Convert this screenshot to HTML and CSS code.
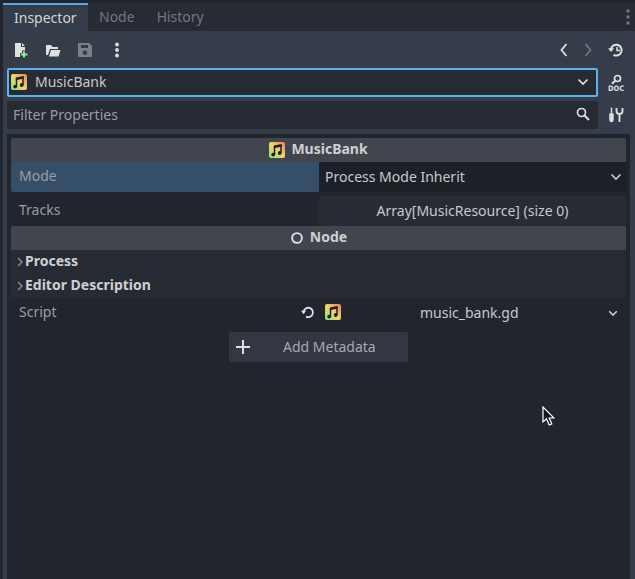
FILE: index.html

```html
<!DOCTYPE html>
<html lang="en">
<head>
  <meta charset="UTF-8" />
  <title>Inspector</title>
  <link rel="stylesheet" href="styles.css">
</head>
<body>

<svg width="0" height="0" class="defs">
  <defs>
    <linearGradient id="musicGrad" x1="0" y1="1" x2="1" y2="0">
      <stop offset="0" stop-color="#7fe67a" />
      <stop offset="0.5" stop-color="#f2d565" />
      <stop offset="1" stop-color="#ec7f5c" />
    </linearGradient>
    <symbol id="music" viewBox="0 0 16 16">
      <rect width="16" height="16" rx="2" fill="url(#musicGrad)" />
      <path d="M5.5 4.5 V12.5 M12 3 V11" fill="none" stroke="#1d2027" stroke-width="1.5" />
      <path d="M4.8 3.6 L12.7 2 V4.6 L4.8 6.2 Z" fill="#1d2027" />
      <circle cx="4.2" cy="12.6" r="1.9" fill="#1d2027" />
      <circle cx="10.7" cy="11" r="1.9" fill="#1d2027" />
    </symbol>
  </defs>
</svg>

<div class="dock">

  <div class="tabbar">
    <div class="tab active">Inspector</div>
    <div class="tab">Node</div>
    <div class="tab">History</div>
    <svg class="tab-menu" width="4" height="16" viewBox="0 0 4 16"><circle cx="2" cy="2" r="1.7" /><circle cx="2" cy="8" r="1.7" /><circle cx="2" cy="14" r="1.7" /></svg>
  </div>

  <div class="toolbar">
    <svg class="tool" width="16" height="16" viewBox="0 0 16 16">
      <path d="M2 1 H8 V5 H12 V8.5 H9 V11 H7 V15 H2 Z M9 1 L12 4 H9 Z" fill="#e0e0e0" />
      <path d="M10 9.5 H12 V11.5 H14.5 V13.5 H12 V15.5 H10 V13.5 H7.8 V11.5 H10 Z" fill="#8eef97" />
    </svg>
    <svg class="tool" width="16" height="16" viewBox="0 0 16 16">
      <path d="M1 13 V3 H6 L7.5 5 H13 V7 H5 L3 13 Z M4 14.5 L6 8 H15.5 L13.5 14.5 Z" fill="#e0e0e0" />
    </svg>
    <svg class="tool" width="16" height="16" viewBox="0 0 16 16">
      <path fill-rule="evenodd" d="M2 1 H12 L15 4 V14 a1 1 0 0 1 -1 1 H2 a1 1 0 0 1 -1 -1 V2 a1 1 0 0 1 1 -1 Z M4 3 V6 H11 V3 Z M8 8.5 a2.3 2.3 0 1 0 0.01 0 Z" fill="#7c7f86" />
    </svg>
    <svg class="tool" width="16" height="16" viewBox="0 0 16 16"><circle cx="8" cy="2.5" r="1.9" fill="#e0e0e0" /><circle cx="8" cy="8" r="1.9" fill="#e0e0e0" /><circle cx="8" cy="13.5" r="1.9" fill="#e0e0e0" /></svg>
    <div class="spacer"></div>
    <svg class="nav" width="8" height="14" viewBox="0 0 8 14"><path d="M6.5 1 L1.5 7 L6.5 13" fill="none" stroke="#e0e0e0" stroke-width="1.8" /></svg>
    <svg class="nav" width="8" height="14" viewBox="0 0 8 14"><path d="M1.5 1 L6.5 7 L1.5 13" fill="none" stroke="#70747b" stroke-width="1.8" /></svg>
    <svg class="tool history" width="16" height="16" viewBox="0 0 16 16">
      <path d="M3 7 A5.4 5.4 0 1 1 5.5 12.8" fill="none" stroke="#e0e0e0" stroke-width="2" />
      <path d="M0 6.2 H6 L3 10 Z" fill="#e0e0e0" />
      <path d="M9 5 V8.5 H12" fill="none" stroke="#e0e0e0" stroke-width="1.5" />
    </svg>
  </div>

  <div class="field-row">
    <div class="selector">
      <svg width="16" height="16"><use href="#music" /></svg>
      <span class="selector-name">MusicBank</span>
      <svg class="chevron" width="12" height="8" viewBox="0 0 12 8"><path d="M1.5 1.5 L6 6 L10.5 1.5" fill="none" stroke="#e0e0e0" stroke-width="1.7" /></svg>
    </div>
    <svg class="side-icon" width="18" height="18" viewBox="0 0 18 18">
      <circle cx="10.5" cy="4.5" r="3" fill="none" stroke="#e0e0e0" stroke-width="1.7" />
      <path d="M8.2 6.8 L5 9.8" stroke="#e0e0e0" stroke-width="2" />
      <text class="doc-label" x="9" y="16.5" text-anchor="middle" textLength="16" lengthAdjust="spacingAndGlyphs">DOC</text>
    </svg>
  </div>

  <div class="field-row filter-row">
    <div class="filter">
      <span>Filter Properties</span>
      <svg width="14" height="14" viewBox="0 0 14 14"><circle cx="5.5" cy="5.5" r="4" fill="none" stroke="#e0e0e0" stroke-width="1.7" /><path d="M8.5 8.5 L13 13" stroke="#e0e0e0" stroke-width="2" /></svg>
    </div>
    <svg class="side-icon" width="16" height="16" viewBox="0 0 16 16">
      <path d="M3.5 0.5 V6 M2 7 H5 V12 a1.5 2.5 0 0 1 -3 0 Z" fill="#e0e0e0" stroke="#e0e0e0" stroke-width="1.4" />
      <path d="M8.5 1 V4 a3 3 0 0 0 6 0 V1 M11.5 6 V15" fill="none" stroke="#e0e0e0" stroke-width="1.8" />
    </svg>
  </div>

  <div class="inspector">
    <div class="section-head">
      <svg width="16" height="16"><use href="#music" /></svg>
      <b>MusicBank</b>
    </div>
    <div class="prop prop-selected">
      <div class="prop-name">Mode</div>
      <div class="prop-value value-option">
        <span>Process Mode Inherit</span>
        <svg width="12" height="8" viewBox="0 0 12 8"><path d="M1.5 1.5 L6 6 L10.5 1.5" fill="none" stroke="#c8c9cb" stroke-width="1.7" /></svg>
      </div>
    </div>
    <div class="prop prop-tracks">
      <div class="prop-name">Tracks</div>
      <div class="prop-value value-array">Array[MusicResource] (size 0)</div>
    </div>
    <div class="section-head">
      <svg width="14" height="14" viewBox="0 0 14 14"><circle cx="7" cy="7" r="4.9" fill="none" stroke="#e0e0e0" stroke-width="1.9" /></svg>
      <b>Node</b>
    </div>
    <div class="groups">
      <div class="group"><svg width="6" height="10" viewBox="0 0 6 10"><path d="M1 1 L5 5 L1 9" fill="none" stroke="#8a8d93" stroke-width="1.5" /></svg><b>Process</b></div>
      <div class="group"><svg width="6" height="10" viewBox="0 0 6 10"><path d="M1 1 L5 5 L1 9" fill="none" stroke="#8a8d93" stroke-width="1.5" /></svg><b>Editor Description</b></div>
    </div>
    <div class="prop prop-script">
      <div class="prop-name">Script</div>
      <div class="script-icons">
        <svg width="14" height="14" viewBox="0 0 14 14"><path d="M2.6 6.5 A4.7 4.7 0 1 1 5 11.6" fill="none" stroke="#e0e0e0" stroke-width="1.8" /><path d="M0 5.8 H5.2 L2.6 9.2 Z" fill="#e0e0e0" /></svg>
        <svg width="16" height="16"><use href="#music" /></svg>
      </div>
      <div class="script-value">
        <span>music_bank.gd</span>
        <svg width="10" height="7" viewBox="0 0 10 7"><path d="M1.2 1.2 L5 5 L8.8 1.2" fill="none" stroke="#c8c9cb" stroke-width="1.6" /></svg>
      </div>
    </div>
    <div class="add-meta">
      <svg width="16" height="16" viewBox="0 0 16 16"><path d="M8 1 V15 M1 8 H15" stroke="#e0e0e0" stroke-width="2" /></svg>
      <span>Add Metadata</span>
    </div>
  </div>
</div>

<!-- mouse pointer sits on top of everything -->
<svg class="cursor" width="13" height="21" viewBox="0 0 13 21">
  <path d="M1 1 V16 L4.5 12.8 L7.2 19 L9.8 18 L7.2 12 H12 Z" fill="#14161a" stroke="#fff" stroke-width="1.2" />
</svg>

</body>
</html>
```

FILE: styles.css

```css
html, body {
  margin: 0;
  padding: 0;
  height: 100%;
}
body {
  background: #21262e;
  font-family: 'Noto Sans', sans-serif;
  font-size: 14px;
  color: #c8c9cb;
  overflow: hidden;
  position: relative;
}
svg {
  display: block;
  flex: none;
}
.defs {
  position: absolute;
}
b {
  font-weight: 700;
}
.dock {
  height: 579px;
  margin-left: 3px;
  padding-top: 3px;
  box-sizing: border-box;
  display: flex;
  flex-direction: column;
}

/* tabs */
.tabbar {
  height: 28px;
  background: #262b34;
  display: flex;
  align-items: stretch;
  flex: none;
}
.tab {
  padding: 0 11px;
  line-height: 28px;
  color: #74777d;
}
.tab.active {
  width: 85px;
  box-sizing: border-box;
  background: #363d4a;
  color: #d3d4d6;
  border-top: 2px solid #5aa5e0;
  line-height: 25px;
}
.tab-menu {
  margin-left: auto;
  margin-right: 5px;
  margin-top: 6px;
  fill: #74777d;
}

/* everything below the tabs */
.toolbar {
  height: 37px;
  flex: none;
  background: #363d4a;
  display: flex;
  align-items: center;
  padding: 0 3px 0 10px;
  box-sizing: border-box;
}
.tool {
  margin-right: 16px;
}
.spacer {
  flex: 1;
}
.nav {
  margin-right: 16px;
}
.tool.history {
  margin-right: 8px;
}
.field-row {
  height: 29px;
  flex: none;
  background: #363d4a;
  display: flex;
  align-items: center;
  padding-left: 4px;
}
.selector {
  width: 591px;
  height: 29px;
  box-sizing: border-box;
  background: #252a33;
  border: 2px solid #5fb0ee;
  border-radius: 2px;
  display: flex;
  align-items: center;
  padding: 0 7px 1px 2px;
}
.selector-name {
  margin-left: 8px;
  margin-bottom: 2px;
  flex: 1;
}
.side-icon {
  margin-left: 9px;
}
.doc-label {
  font-family: 'DejaVu Sans', sans-serif;
  font-weight: 700;
  font-size: 7.5px;
  fill: #e0e0e0;
}
.filter-row {
  height: 37px;
  align-items: flex-start;
  padding-top: 4px;
  box-sizing: border-box;
}
.filter {
  width: 591px;
  height: 28px;
  box-sizing: border-box;
  background: #252a33;
  border-radius: 2px;
  display: flex;
  align-items: center;
  justify-content: space-between;
  padding: 0 8px 2px 6px;
  color: #9a9da2;
}
.filter-row .side-icon {
  margin-top: 6px;
  margin-left: 10px;
}

/* inspector tree */
.inspector {
  flex: 1;
  background: #21262e;
  margin: 0 5px 0 4px;
  padding: 4px 4px 0;
  position: relative;
  box-shadow: -4px 0 0 #363d4a, 5px 0 0 #363d4a;
}
.section-head {
  height: 24px;
  background: #41454e;
  border-radius: 2px 2px 0 0;
  display: flex;
  align-items: center;
  justify-content: center;
  gap: 6px;
  color: #cfd0d2;
}
.section-head b,
.group b {
  margin-bottom: 4px;
}
.prop {
  display: flex;
  height: 30px;
}
.prop-name {
  width: 308px;
  flex: none;
  padding-left: 8px;
  box-sizing: border-box;
  line-height: 27px;
  color: #9a9da2;
}
.prop-value {
  flex: 1;
}
.prop-selected .prop-name {
  background: #364f69;
  border-radius: 2px 0 0 2px;
}
.value-option {
  background: #1c2027;
  display: flex;
  align-items: center;
  justify-content: space-between;
  padding: 0 4px 1px 6px;
}
.prop-tracks {
  margin-top: 4px;
}
.prop-tracks .prop-name {
  line-height: 28px;
}
.value-array {
  background: #262b34;
  text-align: center;
  line-height: 30px;
}
.groups {
  background: #262b33;
}
.group {
  height: 24px;
  padding-left: 6px;
  display: flex;
  align-items: center;
  gap: 2px;
  color: #cfd0d2;
}
.prop-script {
  height: 30px;
  margin-bottom: 4px;
}
.prop-script .prop-name {
  line-height: 27px;
  width: 290px;
}
.script-icons {
  width: 100px;
  flex: none;
  display: flex;
  align-items: center;
  gap: 10px;
  margin-bottom: 2px;
}
.script-value {
  flex: 1;
  display: flex;
  align-items: center;
  justify-content: space-between;
  padding: 0 8px 0 19px;
}
.script-value span {
  margin-bottom: 2px;
}
.script-value svg {
  margin-top: 1px;
}
.add-meta {
  width: 179px;
  height: 30px;
  margin-left: 218px;
  background: #323741;
  border-radius: 2px;
  display: flex;
  align-items: center;
  padding-left: 6px;
  box-sizing: border-box;
  color: #a8aaae;
}
.add-meta span {
  margin-left: 32px;
  margin-bottom: 2px;
}
.cursor {
  position: absolute;
  left: 542px;
  top: 406px;
}
```
